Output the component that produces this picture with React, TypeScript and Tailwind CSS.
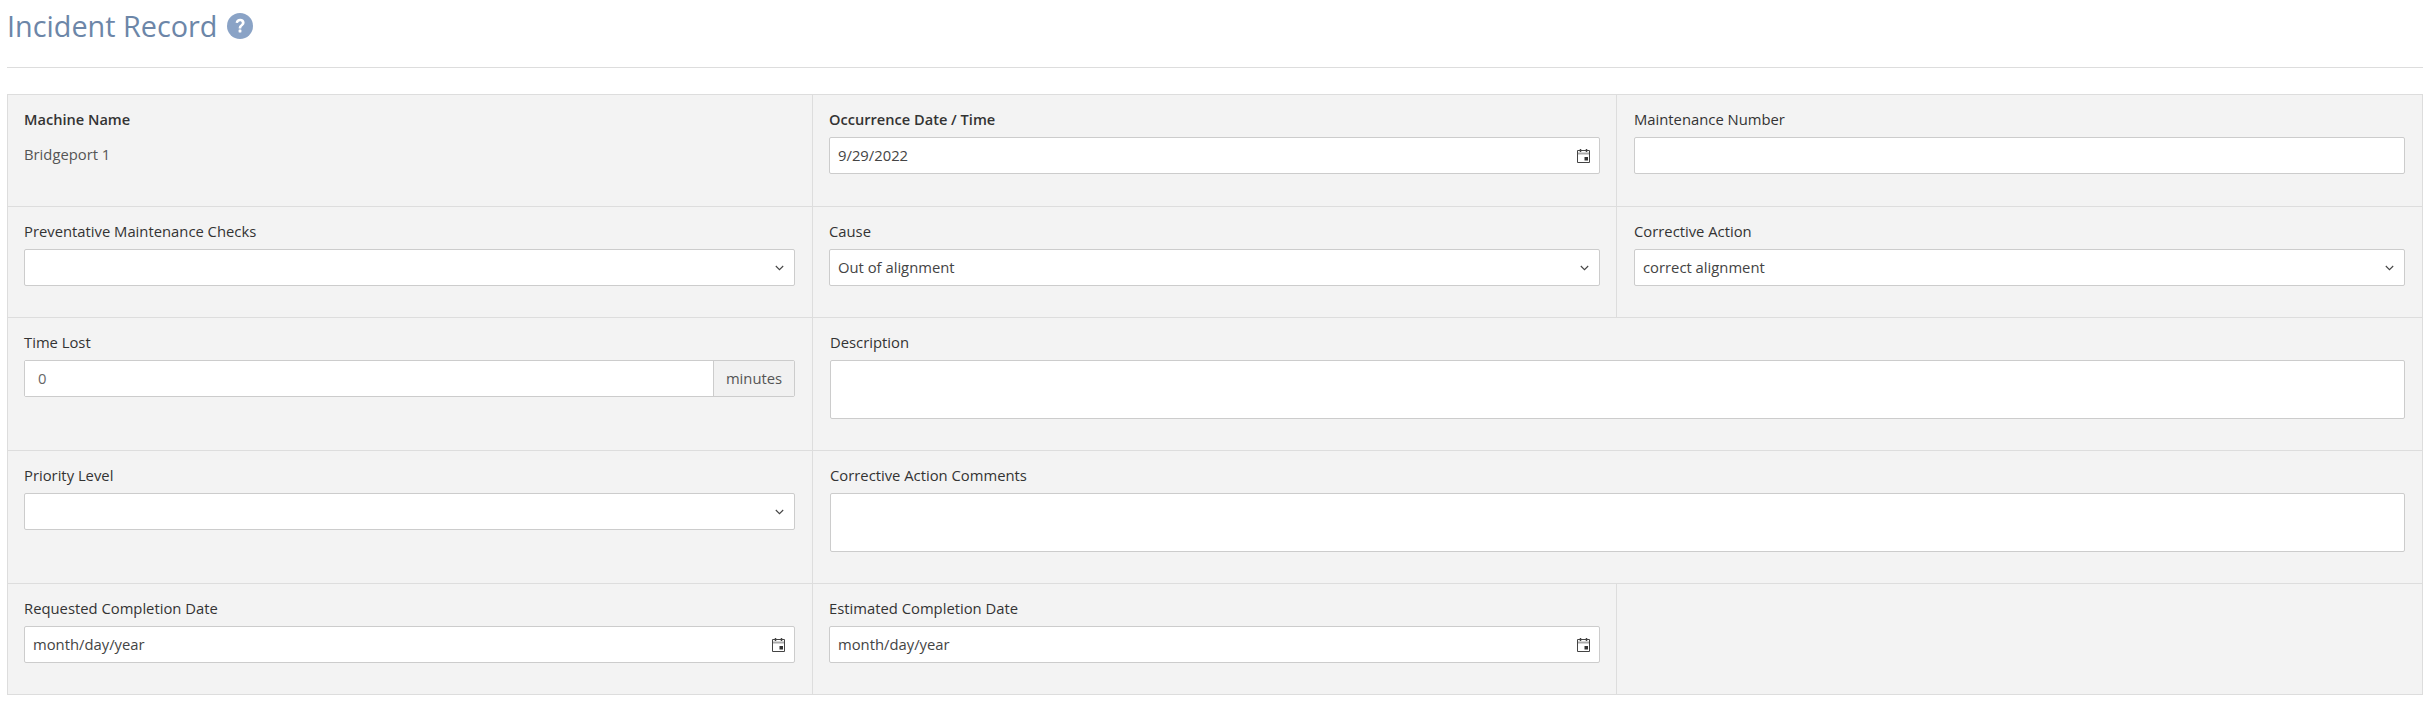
import type { ReactNode } from "react";

const fontStack = { fontFamily: '"Open Sans", "Noto Sans", sans-serif' };
const threeCols = "grid grid-cols-[805px_804px_1fr]";
const twoCols = "grid grid-cols-[805px_1fr]";

function CalendarIcon() {
  return (
    <svg width="13" height="14" viewBox="0 0 13 14" className="shrink-0">
      <path d="M.5 1.5h12v12H.5z" fill="none" stroke="#444" strokeWidth="1" />
      <path d="M1 4.5h11" stroke="#aaa" strokeWidth="2" />
      <path d="M3.5 0v3M9.5 0v3" stroke="#444" strokeWidth="1.5" />
      <rect x="7.5" y="8" width="3.5" height="3.5" fill="#333" />
    </svg>
  );
}

function Chevron() {
  return (
    <svg width="9" height="6" viewBox="0 0 9 6" className="mr-[1px] shrink-0">
      <path d="M.8 1l3.7 3.7L8.2 1" fill="none" stroke="#444" strokeWidth="1.1" />
    </svg>
  );
}

function Label({ text, bold }: { text: string; bold?: boolean }) {
  return (
    <div className={`h-[19px] leading-[19px] text-[#333] ${bold ? "text-[14.6px] font-semibold" : "text-[14.8px]"}`}>
      {text}
    </div>
  );
}

function Box({ value, right }: { value?: string; right?: ReactNode }) {
  return (
    <div className="mt-[8px] flex h-[37px] items-center justify-between rounded-[2px] border border-[#ccc] bg-white pl-[8px] pr-[9px] text-[14.8px] text-[#444]">
      <span>{value}</span>
      {right}
    </div>
  );
}

function Field({ label, value, kind, bold }: { label: string; value?: string; kind?: "date" | "select"; bold?: boolean }) {
  return (
    <div>
      <Label text={label} bold={bold} />
      <Box value={value} right={kind === "date" ? <CalendarIcon /> : kind === "select" ? <Chevron /> : null} />
    </div>
  );
}

function TextArea({ label }: { label: string }) {
  return (
    <div>
      <Label text={label} />
      <div className="mt-[8px] h-[59px] rounded-[2px] border border-[#ccc] bg-white" />
    </div>
  );
}

function Cell({ children, first, last }: { children?: ReactNode; first?: boolean; last?: boolean }) {
  if (last) {
    return <div className="pl-[17px] pr-[17px] pt-[15px]">{children}</div>;
  }

  return (
    <div className={`border-r border-[#ddd] pl-[16px] pt-[15px] ${first ? "pr-[17px]" : "pr-[16px]"}`}>
      {children}
    </div>
  );
}

export default function App() {
  return (
    <div className="h-[704px] bg-white pl-[7px] pr-[7px]" style={fontStack}>
      <div className="flex h-[68px] items-start border-b border-[#ddd]">
        <h1 className="mt-[6px] text-[28.8px] leading-[40px] font-normal text-[#6c86a8]">Incident Record</h1>
        <svg width="26" height="26" viewBox="0 0 26 26" className="ml-[10px] mt-[13px]">
          <circle cx="13" cy="13" r="13" fill="#8aa3c6" />
          <path d="M8.6 9.8c.3-2.6 2.1-4 4.6-4 2.6 0 4.4 1.5 4.4 3.7 0 3.3-3.3 3.2-3.3 6h-2.6c0-3.9 3.1-3.9 3.1-5.8 0-.9-.7-1.5-1.7-1.5-1.1 0-1.8.7-2 1.9z" fill="#fff" />
          <rect x="11.6" y="16.6" width="2.8" height="2.9" rx=".4" fill="#fff" />
        </svg>
      </div>
      <div className="mt-[26px] border border-[#ddd] bg-[#f3f3f3]">
        <div className={`${threeCols} h-[112px] border-b border-[#ddd]`}>
          <Cell first>
            <Label text="Machine Name" bold />
            <div className="mt-[16px] text-[14.8px] leading-[19px] text-[#555]">Bridgeport 1</div>
          </Cell>
          <Cell><Field label="Occurrence Date / Time" value="9/29/2022" kind="date" bold /></Cell>
          <Cell last><Field label="Maintenance Number" /></Cell>
        </div>
        <div className={`${threeCols} h-[111px] border-b border-[#ddd]`}>
          <Cell first><Field label="Preventative Maintenance Checks" kind="select" /></Cell>
          <Cell><Field label="Cause" value="Out of alignment" kind="select" /></Cell>
          <Cell last><Field label="Corrective Action" value="correct alignment" kind="select" /></Cell>
        </div>
        <div className={`${twoCols} h-[133px] border-b border-[#ddd]`}>
          <Cell first>
            <Label text="Time Lost" />
            <div className="mt-[8px] flex h-[37px] rounded-[2px] border border-[#ccc] text-[14.8px]">
              <div className="flex flex-1 items-center bg-white pl-[13px] text-[#666]">0</div>
              <div className="flex w-[81px] items-center justify-center border-l border-[#ccc] bg-[#f1f1f1] text-[#555]">minutes</div>
            </div>
          </Cell>
          <Cell last><TextArea label="Description" /></Cell>
        </div>
        <div className={`${twoCols} h-[133px] border-b border-[#ddd]`}>
          <Cell first><Field label="Priority Level" kind="select" /></Cell>
          <Cell last><TextArea label="Corrective Action Comments" /></Cell>
        </div>
        <div className={`${threeCols} h-[110px]`}>
          <Cell first><Field label="Requested Completion Date" value="month/day/year" kind="date" /></Cell>
          <Cell><Field label="Estimated Completion Date" value="month/day/year" kind="date" /></Cell>
          <Cell last />
        </div>
      </div>
    </div>
  );
}
